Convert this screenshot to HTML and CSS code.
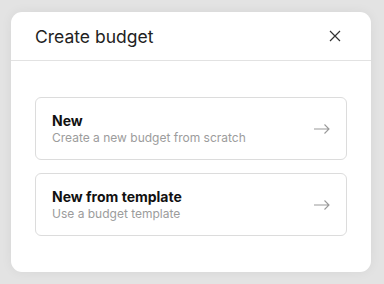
FILE: index.html
```html
<!DOCTYPE html>
<html lang="en">
<head>
    <meta charset="UTF-8">
    <title>Create budget</title>
    <link rel="stylesheet" href="styles.css">
</head>
<body>

    <div class="modal">
        <div class="modal-header">
            <h2>Create budget</h2>
            <button class="close" aria-label="Close">
                <svg width="12" height="12" viewBox="0 0 12 12">
                    <path d="M1 1L11 11M11 1L1 11" stroke="#333" stroke-width="1.2" fill="none"/>
                </svg>
            </button>
        </div>

        <div class="modal-body">
            <a class="option" href="#">
                <div class="option-text">
                    <div class="option-title">New</div>
                    <div class="option-desc">Create a new budget from scratch</div>
                </div>
                <svg class="arrow" width="16" height="10" viewBox="0 0 16 10">
                    <path d="M0 5H15M10.5 0.5L15 5L10.5 9.5" stroke="#999" stroke-width="1.1" fill="none"/>
                </svg>
            </a>

            <a class="option" href="#">
                <div class="option-text">
                    <div class="option-title">New from template</div>
                    <div class="option-desc">Use a budget template</div>
                </div>
                <svg class="arrow" width="16" height="10" viewBox="0 0 16 10">
                    <path d="M0 5H15M10.5 0.5L15 5L10.5 9.5" stroke="#999" stroke-width="1.1" fill="none"/>
                </svg>
            </a>
        </div>
    </div>

</body>
</html>
```

FILE: styles.css
```css
body {
    font-family: 'Inter', 'Liberation Sans', sans-serif;
    margin: 0;
    padding: 12px 13px 12px 11px;
    background: #e3e3e3;
    color: #1a1a1a;
}

.modal {
    width: 360px;
    height: 260px;
    background: #fff;
    border-radius: 11px;
    box-shadow: 0 0 12px rgba(0, 0, 0, 0.06);
    box-sizing: border-box;
}

.modal-header {
    display: flex;
    align-items: center;
    justify-content: space-between;
    height: 48px;
    padding: 0 24px;
    border-bottom: 1px solid #e2e2e2;
}

.modal-header h2 {
    margin: 0;
    font-size: 17.5px;
    font-weight: 400;
    color: #222;
}

.close {
    border: none;
    background: none;
    padding: 0;
    margin-right: 6px;
    width: 12px;
    height: 12px;
    cursor: pointer;
}

.modal-body {
    display: flex;
    flex-direction: column;
    gap: 13px;
    padding: 36px 24px 0 24px;
}

.option {
    display: flex;
    align-items: center;
    justify-content: space-between;
    height: 63px;
    box-sizing: border-box;
    padding: 0 16px 0 16px;
    border: 1px solid #dcdcdc;
    border-radius: 6px;
    text-decoration: none;
    color: inherit;
}

.option-title {
    font-size: 14px;
    font-weight: 700;
    color: #111;
}

.option-desc {
    font-size: 12px;
    color: #9c9c9c;
    margin-top: 1px;
}
```
